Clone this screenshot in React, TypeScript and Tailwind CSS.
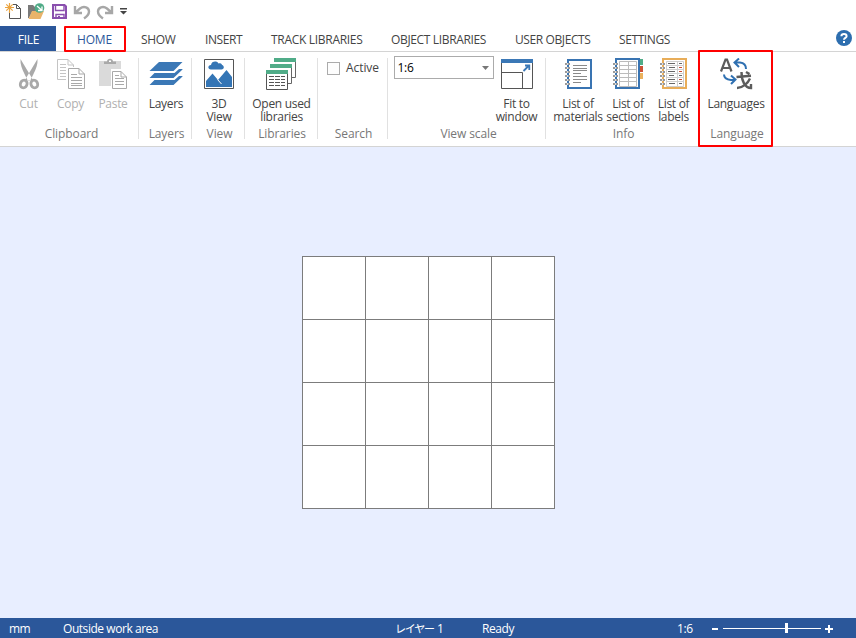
import type { ReactNode } from "react";

const TABS = [
  { label: "SHOW", cell: "w-[64px]", text: "tracking-[-0.3px]" },
  { label: "INSERT", cell: "w-[66px]", text: "tracking-[-0.4px]" },
  { label: "TRACK LIBRARIES", cell: "w-[120px]", text: "tracking-[-0.3px]" },
  { label: "OBJECT LIBRARIES", cell: "w-[124px]", text: "tracking-[-0.35px]" },
  { label: "USER OBJECTS", cell: "w-[104px]", text: "tracking-[-0.4px]" },
  { label: "SETTINGS", cell: "w-[80px]", text: "tracking-[-0.4px]" },
];

function Icon({ x, y = 58, w, h = 32, children }: { x: number; y?: number; w: number; h?: number; children: ReactNode }) {
  return (
    <svg width={w} height={h} viewBox={`${x} ${y} ${w} ${h}`} fill="none" className="block shrink-0">
      {children}
    </svg>
  );
}

function ToolButton({ icon, lines, className = "", muted = false }: { icon: ReactNode; lines: string[]; className?: string; muted?: boolean }) {
  return (
    <button className={`flex shrink-0 flex-col items-center ${muted ? "text-[#b0b0b0]" : "text-[#444]"} ${className}`}>
      {icon}
      <span className="mt-[7px] flex flex-col items-center whitespace-nowrap text-[12px] leading-[13px] tracking-[-0.3px]">
        {lines.map((line) => (
          <span key={line}>{line}</span>
        ))}
      </span>
    </button>
  );
}

function Group({ label, className = "", labelClass = "", children }: { label: string; className?: string; labelClass?: string; children: ReactNode }) {
  return (
    <section className={`flex h-[81px] shrink-0 flex-col border-r border-[#e1e1e1] ${className}`}>
      <div className="flex h-[69px] shrink-0 justify-center">{children}</div>
      <div className={`shrink-0 whitespace-nowrap text-center text-[12px] leading-[14px] tracking-[-0.1px] text-[#777] ${labelClass}`}>{label}</div>
    </section>
  );
}

function QuickAccess() {
  return (
    <div className="flex h-[26px] bg-white">
      <Icon x={0} y={0} w={140} h={26}>
        <path d="M9.500 11V18.500H20.500V8.500L16.500 4.500H13" stroke="#555" />
        <path d="M16.500 4.500V8.500H20.500" stroke="#555" />
        <path d="M9.500 3V13M5 7.500H14M6.300 4.300L12.700 10.700M12.700 4.300L6.300 10.700" stroke="#eba440" strokeWidth="1.200" />
        <path d="M28 5H33L35 7H36V12H32L29 18H28Z" fill="#7a7a7a" />
        <path d="M32 11H44L40.500 19H28.500Z" fill="#e9b36a" />
        <circle cx="39.500" cy="8" r="4.800" fill="#4fab87" />
        <path d="M37 6L41.500 10M42 6.500V10.500H38" stroke="#fff" strokeWidth="1.300" />
        <path d="M53 5H64.500L66 6.500V18H53Z" fill="#fff" stroke="#8a4fae" strokeWidth="2" />
        <path d="M55.500 4V10.500H64V4M56 19V14.500H64V19" stroke="#8a4fae" strokeWidth="1.400" />
        <path d="M58 16H60V19H58Z" fill="#8a4fae" />
        <path d="M75 6V13H82M75.500 12.500L80 8.500C84 5.500 89 7.500 89 11.500C89 14.500 87 16.500 84 18.500" stroke="#a7a7a7" strokeWidth="2.400" />
        <path d="M112 6V13H105M111.500 12.500L107 8.500C103 5.500 98 7.500 98 11.500C98 14.500 100 16.500 103 18.500" stroke="#a7a7a7" strokeWidth="2.400" />
        <path d="M120 8H127V9.500H120ZM120 11H127L123.500 14.500Z" fill="#444" />
      </Icon>
    </div>
  );
}

function TabBar() {
  return (
    <nav className="flex h-[26px] border-b border-[#d4d4d4] bg-white text-[12px] leading-[27px] text-[#444]">
      <div className="h-[25px] w-[56px] bg-[#2b579a] pl-px text-center tracking-[-0.3px] text-white">FILE</div>
      <div className="relative ml-[8px] mr-[15px] h-[26px] w-[62px] rounded-[1px] border-2 border-[#ff0000] bg-white pr-px text-center leading-[23px] tracking-[-0.2px] text-[#2b579a]">
        HOME
      </div>
      {TABS.map((tab) => (
        <div key={tab.label} className={`shrink-0 whitespace-nowrap ${tab.cell} ${tab.text}`}>
          {tab.label}
        </div>
      ))}
      <div className="ml-auto mr-[4px] mt-[4px]">
        <svg width="16" height="16" viewBox="0 0 16 16">
          <circle cx="8" cy="8" r="8" fill="#2d6eaf" />
          <path d="M5.400 6.200C5.400 3.300 10.600 3.300 10.600 6.200C10.600 8 8 7.900 8 9.800" fill="none" stroke="#fff" strokeWidth="2" />
          <path d="M7 11H9V13H7Z" fill="#fff" />
        </svg>
      </div>
    </nav>
  );
}

const CutIcon = (
  <Icon x={18} w={22}>
    <path d="M20.500 59L31 76.500L33 80L28 81L24.500 74C22 69 20 64 20.500 59ZM37.500 59L27 76.500L25 80L30 81L33.500 74C36 69 38 64 37.500 59Z" fill="#a9a9a9" />
    <ellipse cx="23.700" cy="84" rx="3.300" ry="3.900" transform="rotate(25 23.700 84)" fill="#fff" stroke="#a9a9a9" strokeWidth="2.800" />
    <ellipse cx="34.300" cy="84" rx="3.300" ry="3.900" transform="rotate(-25 34.300 84)" fill="#fff" stroke="#a9a9a9" strokeWidth="2.800" />
  </Icon>
);

const CopyIcon = (
  <Icon x={56} w={30}>
    <path d="M57.500 59.500H68L73.500 65V79.500H57.500Z" fill="#fff" stroke="#c4c4c4" />
    <path d="M68 59.500V65H73.500M60 64.500H66M60 67.500H70M60 70.500H70M60 73.500H67M60 76.500H67" stroke="#c4c4c4" />
    <path d="M66 67H86V90H66Z" fill="#fff" />
    <path d="M68.500 68.500H79L84.500 74V88.500H68.500Z" fill="#fff" stroke="#a9a9a9" />
    <path d="M79 68.500V74H84.500M71 74.500H77M71 77.500H82M71 80.500H82M71 83.500H82M71 85.500H82" stroke="#a9a9a9" />
  </Icon>
);

const PasteIcon = (
  <Icon x={98} w={30}>
    <path d="M99 61H121V86H99Z" fill="#dadada" />
    <path d="M104 64V61.500H107C107 57.800 113 57.800 113 61.500H116V64Z" fill="#a9a9a9" />
    <path d="M109 60.500H111V62H109Z" fill="#fff" />
    <path d="M111 69H128V90H111Z" fill="#fff" />
    <path d="M112.500 71.500H121L126.500 77V88.500H112.500Z" fill="#fff" stroke="#a9a9a9" />
    <path d="M121 71.500V77H126.500M115 75.500H119M115 78.500H124M115 81.500H124M115 84.500H124" stroke="#a9a9a9" />
  </Icon>
);

const LayersIcon = (
  <Icon x={149} w={34}>
    <path d="M159 62H182.500L173.500 71H149.500Z" fill="#3b78b6" />
    <path d="M154.500 73H174.500L179 69H182.500V69.500L173.500 78H149.500ZM154.500 80H174.500L179 76H182.500V76.500L173.500 85H149.500Z" fill="#3b78b6" />
  </Icon>
);

const ViewIcon = (
  <Icon x={203} w={32}>
    <path d="M204.500 59.500H233.500V88.500H204.500Z" fill="#fff" stroke="#555" />
    <path d="M211 69.500C207.500 69.500 207.500 65 211 65C211.500 61 217 60.500 218.500 63.500C221 62.500 222 64 222 65C224.500 65.500 224.500 69.500 221.500 69.500Z" fill="#3475b5" />
    <path d="M206 81L212.500 73.500L218 80L226.500 70L232 77V87H206Z" fill="#3475b5" />
    <path d="M217.500 79.500L221.500 84" stroke="#fff" />
  </Icon>
);

const LibrariesIcon = (
  <Icon x={266} w={32}>
    <path d="M275.500 62V59M296.500 61V77.500H293M292.500 67V83.500H289" stroke="#666" />
    <path d="M275 58H297V62H275ZM271 64H293V68H271ZM267 70H289V74H267Z" fill="#50ac88" />
    <path d="M267.500 74V89.500H288.500V74" fill="#fff" stroke="#555" />
    <path d="M270 76.500H275M276 76.500H281M282 76.500H286M270 79.500H275M276 79.500H281M282 79.500H286M270 82.500H275M276 82.500H281M282 82.500H286M270 85.500H275M276 85.500H281M282 85.500H286" stroke="#555" />
  </Icon>
);

const FitIcon = (
  <Icon x={501} w={32}>
    <path d="M501.500 60V88.500H532.500V60M501.500 72.500H522.500V88.500" fill="#fff" stroke="#555" />
    <path d="M501 59H533V63H501Z" fill="#3b78b6" />
    <path d="M523.500 71L529 65.500M525 65.500H529.300V70" stroke="#3b78b6" strokeWidth="1.800" />
  </Icon>
);

// Spiral binding down the left edge of a notebook icon
function Binding({ x }: { x: number }) {
  return (
    <>
      {[63, 67, 71, 75, 79, 83].map((y) => (
        <g key={y}>
          <path d={`M${x} ${y}h5v2h-5Z`} fill="#999" />
          <path d={`M${x + 2} ${y}h1v2h-1Z`} fill="#ddd" />
        </g>
      ))}
    </>
  );
}

const MaterialsIcon = (
  <Icon x={564} w={28}>
    <path d="M568 60H591V88H568Z" fill="#fff" stroke="#3974b2" strokeWidth="2" />
    <path d="M573 65.500H587M573 68.500H587M573 70.500H587M573 73.500H581M573 76.500H587M573 79.500H587M573 82.500H581" stroke="#8a8a8a" />
    <Binding x={565} />
  </Icon>
);

const SectionsIcon = (
  <Icon x={612} w={32}>
    <path d="M640 59H643V65H640Z" fill="#50ac88" />
    <path d="M640 66H643V72H640Z" fill="#ce5136" />
    <path d="M640 73H643V79H640Z" fill="#ebb15d" />
    <path d="M616 59H639V88H616Z" fill="#fff" stroke="#3974b2" strokeWidth="2" />
    <path d="M619.500 61.500H636.500V86.500H619.500ZM628.500 61V87M619 65.500H637M619 69.500H637M619 73.500H637M619 77.500H637M619 81.500H637" stroke="#bcbcbc" />
    <Binding x={613} />
  </Icon>
);

const LabelsIcon = (
  <Icon x={659} w={29}>
    <path d="M663 59H686V88H663Z" fill="#fff" stroke="#e8ad59" strokeWidth="2" />
    <path d="M666.500 61.500H683.500V86.500H666.500ZM677.500 61V87M666 65.500H684M666 69.500H684M666 73.500H684M666 77.500H684M666 81.500H684" stroke="#cfcfcf" />
    <path d="M668 63.500H675M679 63.500H682M669 67.500H675M668 71.500H675M669 75.500H674M679 75.500H682M668 79.500H675M669 83.500H675M679 83.500H682" stroke="#666" />
    <path d="M679 67.500H682M679 71.500H682M679 79.500H682" stroke="#c84b32" />
    <Binding x={660} />
  </Icon>
);

const LanguageIcon = (
  <Icon x={719} w={34}>
    <path d="M721 71.500L725.500 59.500H727L731.500 71.500M723 68H730" stroke="#5c5c5c" strokeWidth="2.200" />
    <path d="M739 58.500L734.500 62.500L739 67M735 62.500H740C744 63 746 65.500 746 69" stroke="#2f70b1" strokeWidth="2" />
    <path d="M731 75.500L735.500 79.500L731 84M735 80H731C727 79.500 724 77.500 724 74.500" stroke="#2f70b1" strokeWidth="2" />
    <path d="M736.500 77L751 75.800M741.500 72C741.500 81 745 88 751 88V84M750 78.500C748 83 743 88 737 88M746 72L749.500 74" stroke="#5c5c5c" strokeWidth="2.400" />
  </Icon>
);

function Ribbon() {
  return (
    <div className="flex h-[95px] border-b border-[#d4d4d4] bg-white pt-[6px]">
      <Group label="Clipboard" className="w-[139px]" labelClass="pl-[5px]">
        <ToolButton icon={CutIcon} lines={["Cut"]} className="ml-[4px] w-[42px]" muted />
        <ToolButton icon={CopyIcon} lines={["Copy"]} className="w-[42px]" muted />
        <ToolButton icon={PasteIcon} lines={["Paste"]} className="w-[43px]" muted />
      </Group>
      <Group label="Layers" className="w-[53px]" labelClass="pl-[3px]">
        <ToolButton icon={LayersIcon} lines={["Layers"]} className="ml-[2px]" />
      </Group>
      <Group label="View" className="w-[53px]" labelClass="pl-[3px]">
        <ToolButton icon={ViewIcon} lines={["3D", "View"]} className="ml-[2px]" />
      </Group>
      <Group label="Libraries" className="w-[73px]" labelClass="pl-[2px]">
        <ToolButton icon={LibrariesIcon} lines={["Open used", "libraries"]} className="ml-px" />
      </Group>
      <Group label="Search" className="w-[70px]" labelClass="pl-[2px]">
        <label className="ml-px flex h-[20px] items-center gap-[6px] text-[12px] leading-[14px] tracking-[-0.1px] text-[#444]">
          <span className="h-[13px] w-[13px] border border-[#ababab] bg-[#fdfdfd]" />
          Active
        </label>
      </Group>
      <Group label="View scale" className="w-[158px]" labelClass="pl-[4px]">
        <div className="-mt-[2px] flex h-[23px] w-[100px] shrink-0 items-center justify-between border border-[#ababab] pl-[3px] pr-[4px] text-[12px] leading-[14px] tracking-[-0.3px] text-black">
          1:6
          <svg width="7" height="4" viewBox="0 0 7 4">
            <path d="M0 0H7L3.500 4Z" fill="#777" />
          </svg>
        </div>
        <ToolButton icon={FitIcon} lines={["Fit to", "window"]} className="w-[46px]" />
      </Group>
      <Group label="Info" className="w-[152px] border-r-0" labelClass="pl-[3px]">
        <ToolButton icon={MaterialsIcon} lines={["List of", "materials"]} className="ml-[3px] w-[52px]" />
        <ToolButton icon={SectionsIcon} lines={["List of", "sections"]} className="w-[48px]" />
        <ToolButton icon={LabelsIcon} lines={["List of", "labels"]} className="w-[43px]" />
      </Group>
      <div className="relative -mt-[8px] h-[97px] w-[75px] rounded-[1px] border-2 border-[#ff0000] bg-white pt-[6px]">
        <Group label="Language" className="border-r-0" labelClass="pl-[3px]">
          <ToolButton icon={LanguageIcon} lines={["Languages"]} className="ml-px" />
        </Group>
      </div>
    </div>
  );
}

function WorkArea() {
  return (
    <main className="flex h-[471px] justify-center bg-[#e8eeff] pl-px pt-[109px]">
      <div className="grid h-[253px] w-[253px] grid-cols-4 grid-rows-4 gap-px border border-[#7c7c7c] bg-[#7c7c7c]">
        {Array.from({ length: 16 }).map((_, i) => (
          <div key={i} className="bg-white" />
        ))}
      </div>
    </main>
  );
}

function StatusBar() {
  return (
    <footer className="flex h-[20px] bg-[#2b579a] text-[12px] leading-[22px] text-white">
      <span className="ml-[9px] w-[54px] tracking-[-0.5px]">mm</span>
      <span className="w-[332px] tracking-[-0.45px]">Outside work area</span>
      <span className="w-[87px] whitespace-nowrap">
        <span className="text-[11px] tracking-[-1.2px]">レイヤー</span> 1
      </span>
      <span className="w-[195px] tracking-[-0.4px]">Ready</span>
      <span className="w-[34px] tracking-[-0.4px]">1:6</span>
      <svg width="124" height="20" viewBox="711 618 124 20" fill="#fff">
        <path d="M712 628H718V630H712ZM723 628H821V629H723ZM785 623H788V633H785ZM825 628H833V630H825ZM828 625H830V633H828Z" />
      </svg>
    </footer>
  );
}

export default function App() {
  return (
    <div className="flex h-[638px] w-[856px] flex-col overflow-hidden bg-white font-['Open_Sans','Noto_Sans_CJK_JP',sans-serif]">
      <QuickAccess />
      <TabBar />
      <Ribbon />
      <WorkArea />
      <StatusBar />
    </div>
  );
}
